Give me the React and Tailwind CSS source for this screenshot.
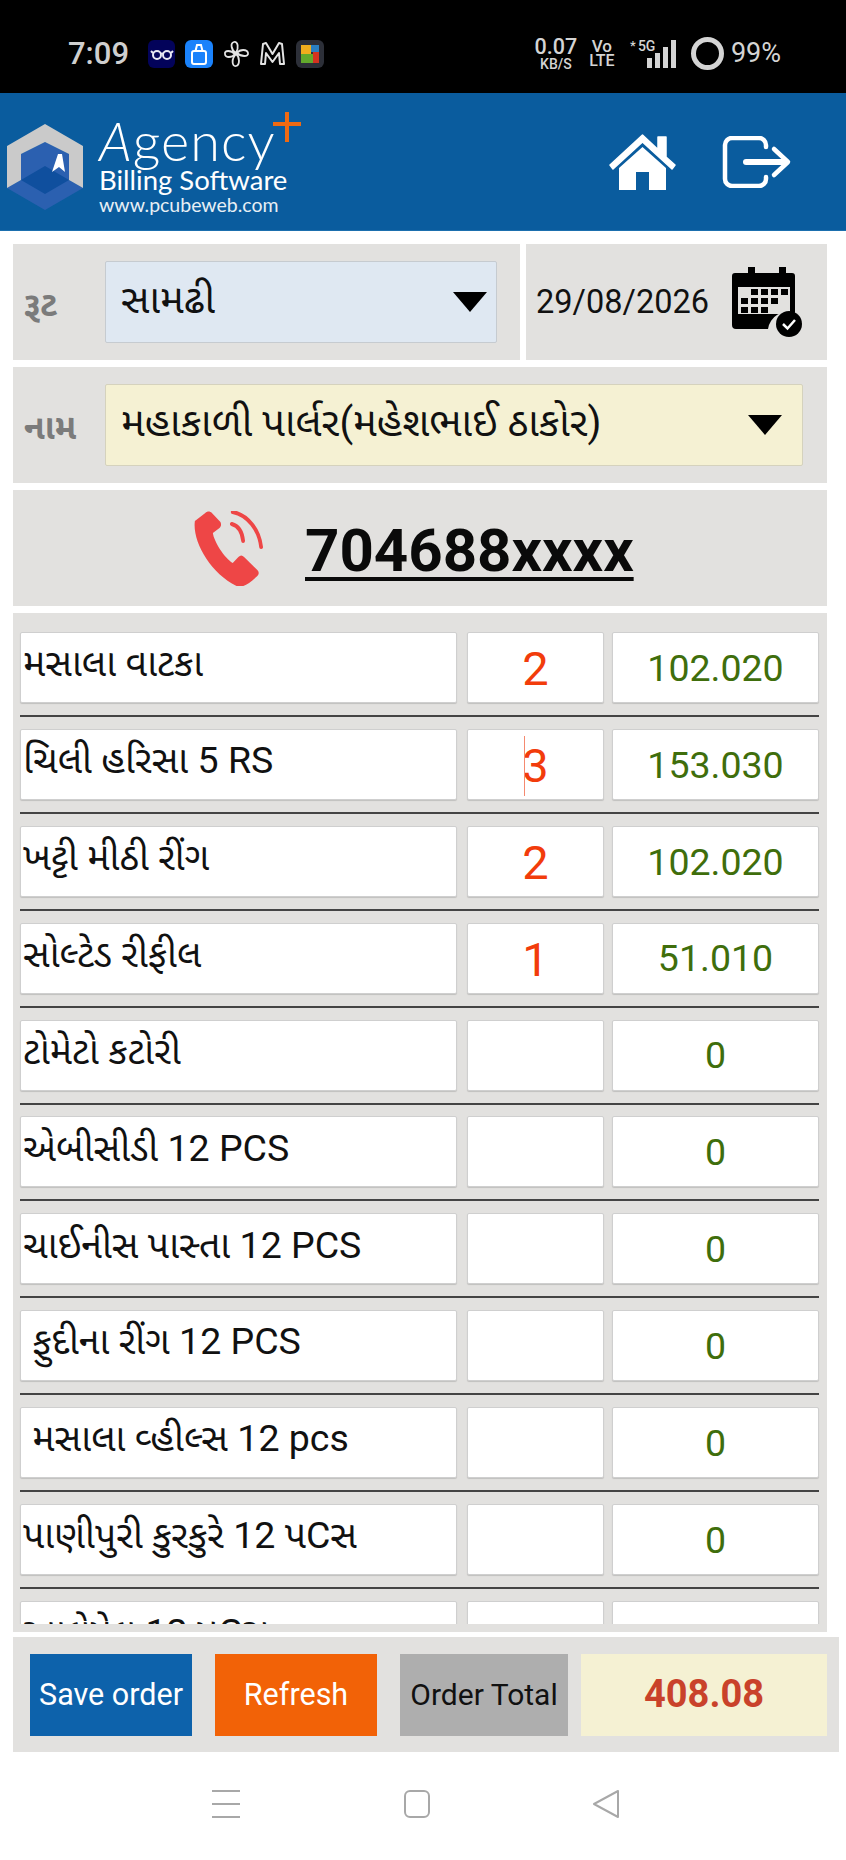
const sans = { fontFamily: '"Roboto","Noto Sans","Noto Sans Gujarati","Lohit Gujarati",sans-serif' };

const rows = [
  ["મસાલા વાટકા", "2", "102.020"],
  ["ચિલી હરિસા 5 RS", "3", "153.030"],
  ["ખટ્ટી મીઠી રીંગ", "2", "102.020"],
  ["સોલ્ટેડ રીફીલ", "1", "51.010"],
  ["ટોમેટો કટોરી", "", "0"],
  ["એબીસીડી 12 PCS", "", "0"],
  ["ચાઈનીસ પાસ્તા 12 PCS", "", "0"],
  ["\u00a0ફુદીના રીંગ 12 PCS", "", "0"],
  ["\u00a0મસાલા વ્હીલ્સ 12 pcs", "", "0"],
  ["પાણીપુરી કુરકુરે 12 પCસ", "", "0"],
  ["આલેપેલ 12 પCસ", "", "0"],
];

function Arrow() {
  return (
    <svg width="34" height="20" viewBox="0 0 34 20" className="shrink-0">
      <polygon points="0,0 34,0 17,20" fill="#000" />
    </svg>
  );
}

function Row({ name, qty, amount, caret }) {
  const box = "h-[71px] bg-white border border-[#cfcfcf] rounded-[2px] shadow-[0_1px_1px_rgba(0,0,0,0.15)] flex items-center";
  return (
    <div>
      <div className="flex">
        <div className={`${box} w-[437px] pl-[2px] pb-[7px] text-[37.500px] leading-none text-[#111] whitespace-nowrap`}>{name}</div>
        <div className={`${box} w-[137px] ml-[10px] pt-[2px] justify-center text-[47px] leading-none text-[#f23c0b] relative`}>
          {caret && <span className="absolute left-[56px] top-[6px] w-[1px] h-[60px] bg-[#f58a70]" />}
          {qty}
        </div>
        <div className={`${box} w-[207px] ml-[8px] pt-[2px] justify-center text-[37.500px] leading-none text-[#3f6e0c]`}>{amount}</div>
      </div>
      <div className="mt-[12px] mb-[11.900px] h-[2px] bg-[#444] w-[799px]" />
    </div>
  );
}

function StatusIcons() {
  return (
    <div className="flex items-center ml-[19px] h-[28px]">
      <div className="w-[27px] h-[28px] rounded-[6px] bg-[#03035a] flex items-center justify-center">
        <svg width="24" height="12" viewBox="0 0 24 12" fill="none" stroke="#e8e8f4" strokeWidth="2">
          <circle cx="7" cy="7" r="4" /><circle cx="17" cy="7" r="4" /><path d="M11 6q1-1 2 0M3 5l-2-2M21 5l2-2" />
        </svg>
      </div>
      <div className="w-[28px] h-[28px] ml-[10px] rounded-[6px] bg-[#1a82fb] flex items-center justify-center">
        <svg width="18" height="22" viewBox="0 0 18 22" fill="none" stroke="#fff" strokeWidth="2">
          <rect x="2" y="8" width="14" height="13" rx="2" /><path d="M5.500 8 7 2h4l1.500 6" />
        </svg>
      </div>
      <svg width="27" height="28" viewBox="0 0 27 28" fill="none" stroke="#e4e4e4" strokeWidth="1.800" className="ml-[10px]">
        <path d="M13 13C8 10 7 3 11 2c4-1 5 6 2 11ZM14 13c3-4 10-4 11 0 1 4-7 4-11 0ZM13 14c4 3 4 11 0 12-4 1-5-7 0-12ZM12 14c-3 4-10 4-10 0-1-4 6-4 10 0Z" />
      </svg>
      <svg width="27" height="26" viewBox="0 0 27 26" fill="none" stroke="#e4e4e4" strokeWidth="2" className="ml-[9px]">
        <path d="M2 23 4 3l3-1 6.500 11L20 2l3 1 2 20h-4l-1-11-6.500 9L7 12 6 23Z" strokeLinejoin="round" />
      </svg>
      <div className="w-[28px] h-[28px] ml-[10px] rounded-[6px] bg-[#2c2f38] p-[5px]">
        <svg width="18" height="18" viewBox="0 0 18 18">
          <rect x="0" y="0" width="10" height="9" fill="#f0ad1d" />
          <rect x="10" y="0" width="8" height="7" fill="#2a7fc1" />
          <rect x="0" y="9" width="12" height="9" fill="#62a92c" />
          <rect x="12" y="7" width="6" height="11" fill="#d4321f" />
        </svg>
      </div>
    </div>
  );
}

function StatusRight() {
  return (
    <div className="flex items-center text-[#d4d4d4] font-medium">
      <div className="w-[44px] flex flex-col items-center leading-none">
        <span className="text-[21.500px] leading-[18px]">0.07</span>
        <span className="text-[14px] leading-[12px] mt-[2px]">KB/S</span>
      </div>
      <div className="w-[26px] ml-[11px] flex flex-col items-center leading-none">
        <span className="text-[17px] leading-[15px]">Vo</span>
        <span className="text-[16px] leading-[14px]">LTE</span>
      </div>
      <div className="relative w-[47px] h-[28px] ml-[15px]">
        <span className="absolute left-0 top-0 text-[13px] leading-[12px]">*</span>
        <span className="absolute left-[8px] top-0 text-[14px] leading-[12px]">5G</span>
        <svg width="30" height="28" viewBox="0 0 30 28" className="absolute right-0 top-0" fill="#d4d4d4">
          <rect x="0" y="18" width="5" height="10" /><rect x="8" y="13" width="5" height="15" /><rect x="16" y="7" width="5" height="21" /><rect x="24" y="0" width="5" height="28" />
        </svg>
      </div>
      <svg width="33" height="33" viewBox="0 0 33 33" className="ml-[14px]" fill="none" stroke="#d4d4d4" strokeWidth="5">
        <circle cx="16.500" cy="16.500" r="14" />
      </svg>
      <span className="ml-[7px] text-[27px] leading-none font-normal">99%</span>
    </div>
  );
}

function Logo() {
  return (
    <div className="flex items-center mt-[11px]">
      <svg width="76" height="86" viewBox="0 0 76 86" className="ml-[7px]">
        <polygon points="38,18 62,30 62,56 76,64 38,86 0,64 14,56 14,30" fill="#2b60b0" />
        <polygon points="38,42 62,56 38,70 14,56" fill="#0f4f9e" />
        <polygon points="38,0 76,22 76,64 62,56 62,30 38,18 14,30 14,56 0,64 0,22" fill="#cacaca" />
        <polygon points="45,48 51,30 55,30 58,48 52,43" fill="#fff" />
      </svg>
      <div className="relative ml-[16px] w-[190px] h-[93px] text-white" style={{ fontFamily: '"Lato","Open Sans",sans-serif' }}>
        <div className="text-[54px] leading-[48px] font-light tracking-[1px] whitespace-nowrap -mt-[4px]"><i>A</i>gency</div>
        <div className="text-[27.500px] leading-[28px] mt-[1px] whitespace-nowrap">Billing Software</div>
        <div className="text-[19.500px] leading-[20px] mt-[1px] whitespace-nowrap opacity-90">www.pcubeweb.com</div>
        <svg width="28" height="30" viewBox="0 0 28 30" className="absolute left-[174px] -top-[9px]" fill="#ef6a12">
          <rect x="12" y="0" width="4" height="30" /><rect x="0" y="10" width="28" height="4" />
        </svg>
      </div>
    </div>
  );
}

export default function App() {
  return (
    <div className="w-[846px] h-[1860px] overflow-hidden bg-white" style={sans}>
      <div className="h-[93px] bg-black flex items-center pt-[14px] pl-[68px] pr-[65px] justify-between">
        <div className="flex items-center">
          <span className="text-[31px] leading-none text-[#cfcfcf] font-medium">7:09</span>
          <StatusIcons />
        </div>
        <StatusRight />
      </div>

      <div className="h-[138px] bg-[#0a5c9e] flex items-center justify-between pr-[54px] border-b border-[#1b6fae]">
        <Logo />
        <div className="flex items-center">
          <svg width="69" height="56" viewBox="0 0 69 56" fill="#fff">
            <path d="M34.500 1 2 31l3 4 29.500-27L64 35l3-4-9-8V3h-8v12.500Z" stroke="#fff" strokeWidth="1.500" strokeLinejoin="round" />
            <path d="M34.500 13 11 34v22h17V38h13v18h17V34Z" />
          </svg>
          <svg width="70" height="52" viewBox="0 0 70 52" fill="none" stroke="#fff" className="ml-[45px]">
            <path d="M44 11V9a7 7 0 0 0-7-7H10a7 7 0 0 0-7 7v34a7 7 0 0 0 7 7h27a7 7 0 0 0 7-7v-2" strokeWidth="4.500" strokeLinecap="round" />
            <path d="M24 26h40" strokeWidth="6" strokeLinecap="round" />
            <path d="M52 13l14 13-14 13" strokeWidth="4.500" strokeLinecap="round" strokeLinejoin="round" />
          </svg>
        </div>
      </div>

      <div className="pl-[13px] pt-[13px]">
        <div className="flex">
          <div className="w-[507px] h-[116px] bg-[#e2e1df] flex items-center">
            <span className="w-[92px] pl-[11px] pt-[4px] text-[34px] font-bold text-[#7b7b7b] leading-none">રૂટ</span>
            <div className="w-[392px] h-[82px] mb-[1px] bg-[#dfe8f2] border border-[#c6cbd0] rounded-[2px] flex items-center justify-between pl-[15px] pr-[9px] text-[40px] leading-none text-[#111]">
              <span className="pb-[4px]">સામઢી</span>
              <Arrow />
            </div>
          </div>
          <div className="w-[301px] h-[116px] ml-[6px] bg-[#e2e1df] flex items-center">
            <span className="ml-[10px] text-[32.500px] leading-none text-[#111] whitespace-nowrap">29/08/2026</span>
            <svg width="70" height="70" viewBox="0 0 70 70" className="ml-[23px]">
              <path d="M10 6h6V0h7v6h24V0h7v6h6a3 3 0 0 1 3 3v37a20 20 0 0 0-27 16H4a4 4 0 0 1-4-4V9a3 3 0 0 1 3-3Z" fill="#000" />
              <rect x="6" y="20" width="52" height="27" fill="#e2e1df" />
              <g fill="#000">
                <rect x="19" y="22" width="7" height="6" /><rect x="29" y="22" width="7" height="6" /><rect x="39" y="22" width="7" height="6" /><rect x="49" y="22" width="7" height="6" />
                <rect x="9" y="31" width="7" height="6" /><rect x="19" y="31" width="7" height="6" /><rect x="29" y="31" width="7" height="6" /><rect x="39" y="31" width="7" height="6" />
                <rect x="9" y="40" width="7" height="6" /><rect x="19" y="40" width="7" height="6" /><rect x="29" y="40" width="7" height="6" />
              </g>
              <circle cx="57" cy="57" r="13" fill="#000" />
              <path d="M51 57l4.500 4.500L63 53" fill="none" stroke="#fff" strokeWidth="2.500" />
            </svg>
          </div>
        </div>

        <div className="mt-[7px] w-[814px] h-[116px] bg-[#e2e1df] flex items-center">
          <span className="w-[92px] pl-[11px] pt-[4px] text-[34px] font-bold text-[#7b7b7b] leading-none">નામ</span>
          <div className="w-[698px] h-[82px] mb-[1px] bg-[#f5f1d3] border border-[#d5d2bd] rounded-[2px] flex items-center justify-between pl-[15px] pr-[20px] text-[40px] leading-none text-[#111] whitespace-nowrap">
            <span className="pb-[4px]">મહાકાળી પાર્લર(મહેશભાઈ ઠાકોર)</span>
            <Arrow />
          </div>
        </div>

        <div className="mt-[7px] w-[814px] h-[116px] bg-[#e2e1df] flex items-center pl-[180px]">
          <svg width="70" height="75" viewBox="0 0 74 75" preserveAspectRatio="none" className="shrink-0">
            <path d="M13 2 2 10C-1 30 18 62 46 75c6 2 12-1 22-10 2-2 2-4 0-6L54 46c-2-2-4-2-6 0l-6 6C33 47 22 30 21 22l7-5c2-2 2-4 1-6L20 2c-2-2-5-2-7 0Z" fill="#ee4646" />
            <path d="M41 13c8 2 11 8 12 17" fill="none" stroke="#ee4646" strokeWidth="4" strokeLinecap="round" />
            <path d="M42 1c16 3 28 18 30 35" fill="none" stroke="#ee4646" strokeWidth="4" strokeLinecap="round" />
          </svg>
          <span className="ml-[42px] pt-[6px] text-[60px] leading-none font-bold text-[#0a0a0a] underline decoration-[4px] underline-offset-[6px]">704688xxxx</span>
        </div>

        <div className="mt-[7px] w-[814px] h-[1019px] bg-[#e2e1df] pb-[8px]">
          <div className="h-[1011px] overflow-hidden pl-[7px] pt-[19px]">
            {rows.map((r, i) => (
              <Row key={i} name={r[0]} qty={r[1]} amount={r[2]} caret={i === 1} />
            ))}
          </div>
        </div>

        <div className="mt-[5px] w-[826px] h-[115px] bg-[#e2e1df] flex items-center pl-[17px]">
          <div className="w-[162px] h-[82px] bg-[#0d62ab] text-white text-[30.500px] flex items-center justify-center whitespace-nowrap">Save order</div>
          <div className="w-[162px] h-[82px] ml-[23px] bg-[#f26207] text-white text-[30.500px] flex items-center justify-center">Refresh</div>
          <div className="w-[168px] h-[82px] ml-[23px] bg-[#aeaeae] text-[#111] text-[30px] flex items-center justify-center whitespace-nowrap">Order Total</div>
          <div className="w-[246px] h-[82px] ml-[13px] bg-[#f5f1d3] text-[#c9422a] text-[38px] font-bold flex items-center justify-center">408.08</div>
        </div>

        <div className="flex items-center mt-[38px] pl-[199px]">
          <svg width="28" height="28" viewBox="0 0 28 28" fill="#a8a8a8">
            <rect y="0" width="28" height="2" /><rect y="13" width="28" height="2" /><rect y="26" width="28" height="2" />
          </svg>
          <svg width="26" height="28" viewBox="0 0 26 28" fill="none" stroke="#a8a8a8" strokeWidth="2" className="ml-[164px]">
            <rect x="1" y="1" width="24" height="26" rx="5" />
          </svg>
          <svg width="28" height="28" viewBox="0 0 28 28" fill="none" stroke="#a8a8a8" strokeWidth="2" strokeLinejoin="round" className="ml-[162px]">
            <path d="M26 1v26L2 14Z" />
          </svg>
        </div>
      </div>
    </div>
  );
}
